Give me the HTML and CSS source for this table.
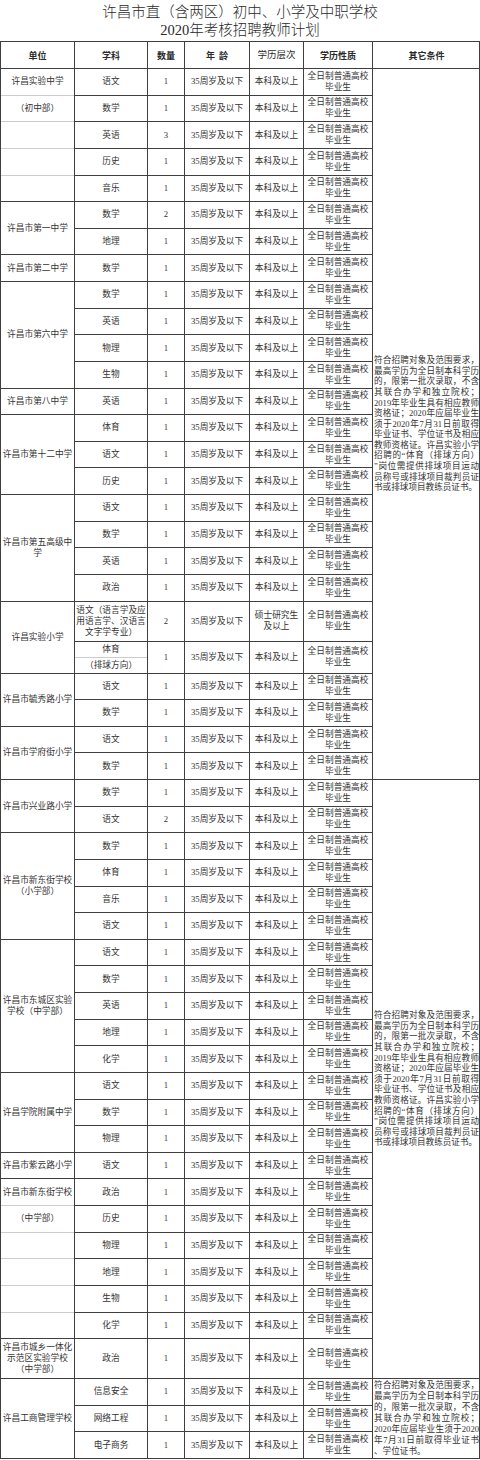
FILE: index.html
```html
<!DOCTYPE html>
<html lang="zh-CN">
<head>
<meta charset="utf-8">
<title>许昌市直2020年考核招聘教师计划</title>
<link rel="stylesheet" href="styles.css">
</head>
<body>
<h1 class="title">许昌市直（含两区）初中、小学及中职学校<br>2020年考核招聘教师计划</h1>
<div class="sheet">
  <div class="c h u">单位</div>
  <div class="c h s">学科</div>
  <div class="c h n">数量</div>
  <div class="c h a">年&nbsp;&nbsp;龄</div>
  <div class="c h l soft">学历层次</div>
  <div class="c h q">学历性质</div>
  <div class="c h o">其它条件</div>

  <!-- 许昌实验中学 -->
  <div class="c u r5 sub sub5"><div class="sc">许昌实验中学</div><div class="sc">（初中部）</div><div class="sc"></div><div class="sc"></div><div class="sc"></div></div>
  <div class="c s">语文</div><div class="c n">1</div><div class="c a">35周岁及以下</div><div class="c l">本科及以上</div><div class="c q">全日制普通高校<br>毕业生</div>
  <div class="c o r26">
    <div class="note">
      <span class="ln">符合招聘对象及范围要求，</span>
      <span class="ln">最高学历为全日制本科学历</span>
      <span class="ln">的，限第一批次录取，不含</span>
      <span class="ln">其联合办学和独立院校；</span>
      <span class="ln">2019年毕业生具有相应教师</span>
      <span class="ln">资格证；2020年应届毕业生</span>
      <span class="ln">须于2020年7月31日前取得</span>
      <span class="ln">毕业证书、学位证书及相应</span>
      <span class="ln">教师资格证。许昌实验小学</span>
      <span class="ln">招聘的“体育（排球方向）</span>
      <span class="ln">”岗位需提供排球项目运动</span>
      <span class="ln">员称号或排球项目裁判员证</span>
      <span class="ln end">书或排球项目教练员证书。</span>
    </div>
  </div>
  <div class="c s">数学</div><div class="c n">1</div><div class="c a">35周岁及以下</div><div class="c l">本科及以上</div><div class="c q">全日制普通高校<br>毕业生</div>
  <div class="c s">英语</div><div class="c n">3</div><div class="c a">35周岁及以下</div><div class="c l">本科及以上</div><div class="c q">全日制普通高校<br>毕业生</div>
  <div class="c s">历史</div><div class="c n">1</div><div class="c a">35周岁及以下</div><div class="c l">本科及以上</div><div class="c q">全日制普通高校<br>毕业生</div>
  <div class="c s">音乐</div><div class="c n">1</div><div class="c a">35周岁及以下</div><div class="c l">本科及以上</div><div class="c q">全日制普通高校<br>毕业生</div>

  <!-- 许昌市第一中学 -->
  <div class="c u r2">许昌市第一中学</div>
  <div class="c s">数学</div><div class="c n">2</div><div class="c a">35周岁及以下</div><div class="c l">本科及以上</div><div class="c q">全日制普通高校<br>毕业生</div>
  <div class="c s">地理</div><div class="c n">1</div><div class="c a">35周岁及以下</div><div class="c l">本科及以上</div><div class="c q">全日制普通高校<br>毕业生</div>

  <!-- 许昌市第二中学 -->
  <div class="c u">许昌市第二中学</div>
  <div class="c s">数学</div><div class="c n">1</div><div class="c a">35周岁及以下</div><div class="c l">本科及以上</div><div class="c q">全日制普通高校<br>毕业生</div>

  <!-- 许昌市第六中学 -->
  <div class="c u r4">许昌市第六中学</div>
  <div class="c s">数学</div><div class="c n">1</div><div class="c a">35周岁及以下</div><div class="c l">本科及以上</div><div class="c q">全日制普通高校<br>毕业生</div>
  <div class="c s">英语</div><div class="c n">1</div><div class="c a">35周岁及以下</div><div class="c l">本科及以上</div><div class="c q">全日制普通高校<br>毕业生</div>
  <div class="c s">物理</div><div class="c n">1</div><div class="c a">35周岁及以下</div><div class="c l">本科及以上</div><div class="c q">全日制普通高校<br>毕业生</div>
  <div class="c s">生物</div><div class="c n">1</div><div class="c a">35周岁及以下</div><div class="c l">本科及以上</div><div class="c q">全日制普通高校<br>毕业生</div>

  <!-- 许昌市第八中学 -->
  <div class="c u">许昌市第八中学</div>
  <div class="c s">英语</div><div class="c n">1</div><div class="c a">35周岁及以下</div><div class="c l">本科及以上</div><div class="c q">全日制普通高校<br>毕业生</div>

  <!-- 许昌市第十二中学 -->
  <div class="c u r3">许昌市第十二中学</div>
  <div class="c s">体育</div><div class="c n">1</div><div class="c a">35周岁及以下</div><div class="c l">本科及以上</div><div class="c q">全日制普通高校<br>毕业生</div>
  <div class="c s">语文</div><div class="c n">1</div><div class="c a">35周岁及以下</div><div class="c l">本科及以上</div><div class="c q">全日制普通高校<br>毕业生</div>
  <div class="c s">历史</div><div class="c n">1</div><div class="c a">35周岁及以下</div><div class="c l">本科及以上</div><div class="c q">全日制普通高校<br>毕业生</div>

  <!-- 许昌市第五高级中学 -->
  <div class="c u r4">许昌市第五高级中<br>学</div>
  <div class="c s">语文</div><div class="c n">1</div><div class="c a">35周岁及以下</div><div class="c l">本科及以上</div><div class="c q">全日制普通高校<br>毕业生</div>
  <div class="c s">数学</div><div class="c n">1</div><div class="c a">35周岁及以下</div><div class="c l">本科及以上</div><div class="c q">全日制普通高校<br>毕业生</div>
  <div class="c s">英语</div><div class="c n">1</div><div class="c a">35周岁及以下</div><div class="c l">本科及以上</div><div class="c q">全日制普通高校<br>毕业生</div>
  <div class="c s">政治</div><div class="c n">1</div><div class="c a">35周岁及以下</div><div class="c l">本科及以上</div><div class="c q">全日制普通高校<br>毕业生</div>

  <!-- 许昌实验小学 -->
  <div class="c u r2">许昌实验小学</div>
  <div class="c s">语文（语言学及应<br>用语言学、汉语言<br>文字学专业）</div><div class="c n">2</div><div class="c a">35周岁及以下</div><div class="c l">硕士研究生<br>及以上</div><div class="c q">全日制普通高校<br>毕业生</div>
  <div class="c s sub sub2"><div class="sc">体育</div><div class="sc">（排球方向）</div></div><div class="c n">1</div><div class="c a">35周岁及以下</div><div class="c l">本科及以上</div><div class="c q">全日制普通高校<br>毕业生</div>

  <!-- 许昌市毓秀路小学 -->
  <div class="c u r2">许昌市毓秀路小学</div>
  <div class="c s">语文</div><div class="c n">1</div><div class="c a">35周岁及以下</div><div class="c l">本科及以上</div><div class="c q">全日制普通高校<br>毕业生</div>
  <div class="c s">数学</div><div class="c n">1</div><div class="c a">35周岁及以下</div><div class="c l">本科及以上</div><div class="c q">全日制普通高校<br>毕业生</div>

  <!-- 许昌市学府街小学 -->
  <div class="c u r2">许昌市学府街小学</div>
  <div class="c s">语文</div><div class="c n">1</div><div class="c a">35周岁及以下</div><div class="c l">本科及以上</div><div class="c q">全日制普通高校<br>毕业生</div>
  <div class="c s">数学</div><div class="c n">1</div><div class="c a">35周岁及以下</div><div class="c l">本科及以上</div><div class="c q">全日制普通高校<br>毕业生</div>

  <!-- 许昌市兴业路小学 -->
  <div class="c u r2">许昌市兴业路小学</div>
  <div class="c s">数学</div><div class="c n">1</div><div class="c a">35周岁及以下</div><div class="c l">本科及以上</div><div class="c q">全日制普通高校<br>毕业生</div>
  <div class="c o r22">
    <div class="note">
      <span class="ln">符合招聘对象及范围要求，</span>
      <span class="ln">最高学历为全日制本科学历</span>
      <span class="ln">的，限第一批次录取，不含</span>
      <span class="ln">其联合办学和独立院校；</span>
      <span class="ln">2019年毕业生具有相应教师</span>
      <span class="ln">资格证；2020年应届毕业生</span>
      <span class="ln">须于2020年7月31日前取得</span>
      <span class="ln">毕业证书、学位证书及相应</span>
      <span class="ln">教师资格证。许昌实验小学</span>
      <span class="ln">招聘的“体育（排球方向）</span>
      <span class="ln">”岗位需提供排球项目运动</span>
      <span class="ln">员称号或排球项目裁判员证</span>
      <span class="ln end">书或排球项目教练员证书。</span>
    </div>
  </div>
  <div class="c s">语文</div><div class="c n">2</div><div class="c a">35周岁及以下</div><div class="c l">本科及以上</div><div class="c q">全日制普通高校<br>毕业生</div>

  <!-- 许昌市新东街学校（小学部） -->
  <div class="c u r4">许昌市新东街学校<br>（小学部）</div>
  <div class="c s">数学</div><div class="c n">1</div><div class="c a">35周岁及以下</div><div class="c l">本科及以上</div><div class="c q">全日制普通高校<br>毕业生</div>
  <div class="c s">体育</div><div class="c n">1</div><div class="c a">35周岁及以下</div><div class="c l">本科及以上</div><div class="c q">全日制普通高校<br>毕业生</div>
  <div class="c s">音乐</div><div class="c n">1</div><div class="c a">35周岁及以下</div><div class="c l">本科及以上</div><div class="c q">全日制普通高校<br>毕业生</div>
  <div class="c s">语文</div><div class="c n">1</div><div class="c a">35周岁及以下</div><div class="c l">本科及以上</div><div class="c q">全日制普通高校<br>毕业生</div>

  <!-- 许昌市东城区实验学校（中学部） -->
  <div class="c u r5">许昌市东城区实验<br>学校（中学部）</div>
  <div class="c s">语文</div><div class="c n">1</div><div class="c a">35周岁及以下</div><div class="c l">本科及以上</div><div class="c q">全日制普通高校<br>毕业生</div>
  <div class="c s">数学</div><div class="c n">1</div><div class="c a">35周岁及以下</div><div class="c l">本科及以上</div><div class="c q">全日制普通高校<br>毕业生</div>
  <div class="c s">英语</div><div class="c n">1</div><div class="c a">35周岁及以下</div><div class="c l">本科及以上</div><div class="c q">全日制普通高校<br>毕业生</div>
  <div class="c s">地理</div><div class="c n">1</div><div class="c a">35周岁及以下</div><div class="c l">本科及以上</div><div class="c q">全日制普通高校<br>毕业生</div>
  <div class="c s">化学</div><div class="c n">1</div><div class="c a">35周岁及以下</div><div class="c l">本科及以上</div><div class="c q">全日制普通高校<br>毕业生</div>

  <!-- 许昌学院附属中学 -->
  <div class="c u r3">许昌学院附属中学</div>
  <div class="c s">语文</div><div class="c n">1</div><div class="c a">35周岁及以下</div><div class="c l">本科及以上</div><div class="c q">全日制普通高校<br>毕业生</div>
  <div class="c s">数学</div><div class="c n">1</div><div class="c a">35周岁及以下</div><div class="c l">本科及以上</div><div class="c q">全日制普通高校<br>毕业生</div>
  <div class="c s">物理</div><div class="c n">1</div><div class="c a">35周岁及以下</div><div class="c l">本科及以上</div><div class="c q">全日制普通高校<br>毕业生</div>

  <!-- 许昌市紫云路小学 -->
  <div class="c u">许昌市紫云路小学</div>
  <div class="c s">语文</div><div class="c n">1</div><div class="c a">35周岁及以下</div><div class="c l">本科及以上</div><div class="c q">全日制普通高校<br>毕业生</div>

  <!-- 许昌市新东街学校（中学部） -->
  <div class="c u r6 sub sub6"><div class="sc">许昌市新东街学校</div><div class="sc">（中学部）</div><div class="sc"></div><div class="sc"></div><div class="sc"></div><div class="sc"></div></div>
  <div class="c s">政治</div><div class="c n">1</div><div class="c a">35周岁及以下</div><div class="c l">本科及以上</div><div class="c q">全日制普通高校<br>毕业生</div>
  <div class="c s">历史</div><div class="c n">1</div><div class="c a">35周岁及以下</div><div class="c l">本科及以上</div><div class="c q">全日制普通高校<br>毕业生</div>
  <div class="c s">物理</div><div class="c n">1</div><div class="c a">35周岁及以下</div><div class="c l">本科及以上</div><div class="c q">全日制普通高校<br>毕业生</div>
  <div class="c s">地理</div><div class="c n">1</div><div class="c a">35周岁及以下</div><div class="c l">本科及以上</div><div class="c q">全日制普通高校<br>毕业生</div>
  <div class="c s">生物</div><div class="c n">1</div><div class="c a">35周岁及以下</div><div class="c l">本科及以上</div><div class="c q">全日制普通高校<br>毕业生</div>
  <div class="c s">化学</div><div class="c n">1</div><div class="c a">35周岁及以下</div><div class="c l">本科及以上</div><div class="c q">全日制普通高校<br>毕业生</div>

  <!-- 许昌市城乡一体化示范区实验学校（中学部） -->
  <div class="c u">许昌市城乡一体化<br>示范区实验学校<br>（中学部）</div>
  <div class="c s">政治</div><div class="c n">1</div><div class="c a">35周岁及以下</div><div class="c l">本科及以上</div><div class="c q">全日制普通高校<br>毕业生</div>

  <!-- 许昌工商管理学校 -->
  <div class="c u r3">许昌工商管理学校</div>
  <div class="c s">信息安全</div><div class="c n">1</div><div class="c a">35周岁及以下</div><div class="c l">本科及以上</div><div class="c q">全日制普通高校<br>毕业生</div>
  <div class="c o r3">
    <div class="note note-short">
      <span class="ln">符合招聘对象及范围要求，</span>
      <span class="ln">最高学历为全日制本科学历</span>
      <span class="ln">的，限第一批次录取，不含</span>
      <span class="ln">其联合办学和独立院校；</span>
      <span class="ln">2020年应届毕业生须于2020</span>
      <span class="ln">年7月31日前取得毕业证书</span>
      <span class="ln end">、学位证书。</span>
    </div>
  </div>
  <div class="c s">网络工程</div><div class="c n">1</div><div class="c a">35周岁及以下</div><div class="c l">本科及以上</div><div class="c q">全日制普通高校<br>毕业生</div>
  <div class="c s">电子商务</div><div class="c n">1</div><div class="c a">35周岁及以下</div><div class="c l">本科及以上</div><div class="c q">全日制普通高校<br>毕业生</div>
</div>
</body>
</html>
```

FILE: styles.css
```css
* {
  box-sizing: border-box;
  margin: 0;
  padding: 0;
}

html,
body {
  background: #ffffff;
}

body {
  width: 480px;
  font-family: "Liberation Serif", "Noto Sans CJK SC", serif;
  color: #333333;
}

.title {
  height: 41px;
  padding-top: 3px;
  font-size: 14.5px;
  line-height: 18px;
  font-weight: 300;
  text-align: center;
  color: #2a2a2a;
}

.sheet {
  display: grid;
  grid-template-columns: 73px 72px 36px 64px 53px 68px 106px;
  grid-template-rows:
    26px
    repeat(20, 25.63px)
    39px 31px
    repeat(25, 25.63px)
    39px
    repeat(3, 25.63px);
  gap: 1px;
  padding: 1px;
  background: #3f3f3f;
}

.c {
  background: #ffffff;
  display: flex;
  flex-direction: column;
  align-items: center;
  justify-content: center;
  text-align: center;
  font-size: 8.7px;
  line-height: 11px;
  white-space: nowrap;
}

.u { grid-column: 1; }
.s { grid-column: 2; }
.n { grid-column: 3; }
.a { grid-column: 4; }
.l { grid-column: 5; }
.q { grid-column: 6; }
.o { grid-column: 7; }

.r2 { grid-row: span 2; }
.r3 { grid-row: span 3; }
.r4 { grid-row: span 4; }
.r5 { grid-row: span 5; }
.r6 { grid-row: span 6; }
.r22 { grid-row: span 22; }
.r26 { grid-row: span 26; }

.h {
  font-family: "Noto Sans CJK SC", sans-serif;
  font-weight: 700;
  font-size: 9px;
  color: #2a2a2a;
}

.h.soft {
  font-family: "Liberation Serif", "Noto Sans CJK SC", serif;
  font-weight: 400;
  font-size: 9.5px;
}

/* cells split by faint inner rules */
.sub {
  display: grid;
  grid-template-columns: 1fr;
  align-items: stretch;
  justify-items: stretch;
  align-content: stretch;
  justify-content: stretch;
  gap: 1px;
  background: #cdcdcd;
}

.sub2 { grid-template-rows: repeat(2, 1fr); }
.sub5 { grid-template-rows: repeat(5, 1fr); }
.sub6 { grid-template-rows: repeat(6, 1fr); }

.sc {
  background: #ffffff;
  display: flex;
  align-items: center;
  justify-content: center;
}

/* remarks column */
.o {
  align-items: stretch;
  padding: 0 0 0 1px;
}

.h.o {
  align-items: center;
}

.note {
  font-size: 8.6px;
  line-height: 10.6px;
  white-space: normal;
}

.note-short {
  line-height: 11px;
}

.ln {
  display: block;
  text-align: justify;
  text-align-last: justify;
}

.ln.end {
  text-align-last: left;
}
```
